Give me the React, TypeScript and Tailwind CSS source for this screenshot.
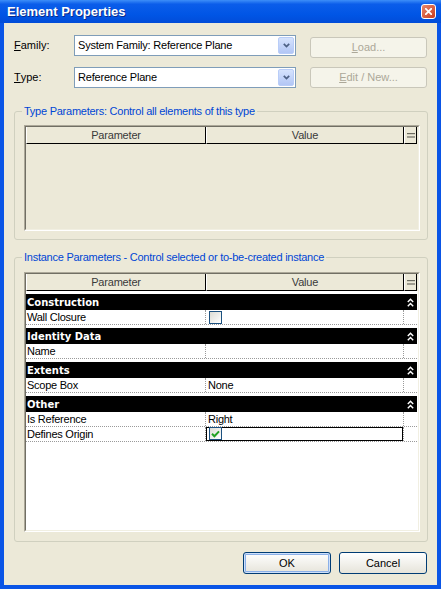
import React from 'react';

type Row = { label: string; value?: string; check?: 'off' | 'on' };
type Section = { name: string; rows: Row[] };

const sections: Section[] = [
  { name: 'Construction', rows: [{ label: 'Wall Closure', check: 'off' }] },
  { name: 'Identity Data', rows: [{ label: 'Name', value: '' }] },
  { name: 'Extents', rows: [{ label: 'Scope Box', value: 'None' }] },
  {
    name: 'Other',
    rows: [
      { label: 'Is Reference', value: 'Right' },
      { label: 'Defines Origin', check: 'on' },
    ],
  },
];

const CloseIcon = () => (
  <svg width="7" height="7" viewBox="0 0 7 7">
    <path d="M0.8 0.8 L6.2 6.2 M6.2 0.8 L0.8 6.2" stroke="white" strokeWidth="1.8" strokeLinecap="square" />
  </svg>
);

const ChevronDown = () => (
  <svg width="7" height="5" viewBox="0 0 7 5">
    <path d="M0.8 0.8 L3.5 3.6 L6.2 0.8" fill="none" stroke="#4D6185" strokeWidth="1.7" />
  </svg>
);

const Collapse = () => (
  <svg width="7" height="9" viewBox="0 0 7 9">
    <path d="M0.8 4 L3.5 1.2 L6.2 4 M0.8 8.2 L3.5 5.4 L6.2 8.2" fill="none" stroke="white" strokeWidth="1.4" />
  </svg>
);

const EqualIcon = () => (
  <svg width="8" height="5" viewBox="0 0 8 5">
    <rect x="0" y="0" width="8" height="1.2" fill="#6b6a60" />
    <rect x="0" y="3.4" width="8" height="1.2" fill="#6b6a60" />
  </svg>
);

const CheckBox = ({ checked }: { checked?: boolean }) => (
  <div className="w-[13px] h-[13px] border border-[#1C5180] bg-linear-to-br from-[#DCDCD5] to-white flex items-center justify-center">
    {checked && (
      <svg width="9" height="8" viewBox="0 0 9 8">
        <path d="M1 3.8 L3.4 6.2 L8 1.4" fill="none" stroke="#21A121" strokeWidth="2" />
      </svg>
    )}
  </div>
);

const Combo = ({ text }: { text: string }) => (
  <div className="w-[222px] h-[21px] border border-[#7F9DB9] bg-white flex items-center justify-between">
    <span className="pl-[3px] text-[11px] tracking-[-0.2px] text-black">{text}</span>
    <div className="w-[16px] h-[17px] mr-[1px] rounded-[2px] border border-[#B9CDF8] bg-linear-to-b from-[#D6E3FD] to-[#B2C6F5] flex items-center justify-center">
      <ChevronDown />
    </div>
  </div>
);

const GridHeader = () => (
  <div className="flex h-[17px] bg-[#ECE9D8] text-[11px] text-[#3a3a3a] tracking-[-0.2px]">
    <div className="w-[180px] border-l border-l-white border-r border-r-black border-b border-b-black flex items-center justify-center">
      Parameter
    </div>
    <div className="w-[198px] border-l border-l-white border-r border-r-black border-b border-b-black flex items-center justify-center">
      Value
    </div>
    <div className="w-[13px] border-l border-l-white border-r border-r-black border-b border-b-black flex items-center justify-center">
      <EqualIcon />
    </div>
  </div>
);

const Grid = ({ className, children }: { className: string; children?: React.ReactNode }) => (
  <div className={`w-[396px] border border-t-[#ACA899] border-l-[#ACA899] border-r-white border-b-white ${className}`}>
    <div className="h-full border border-t-[#716F64] border-l-[#716F64] border-r-[#F1EFE2] border-b-[#F1EFE2] flex flex-col">
      {children}
    </div>
  </div>
);

const Legend = ({ children }: { children: React.ReactNode }) => (
  <legend className="-ml-[2px] px-[2px] text-[11px] leading-[14px] tracking-[-0.25px] text-[#0046D5]">{children}</legend>
);

export default function App() {
  return (
    <div className="w-[441px] h-[589px] bg-[#0A55E6] flex flex-col font-['Liberation_Sans',Arial,sans-serif]">
      <div className="h-[23px] flex items-center justify-between bg-[linear-gradient(180deg,#3D8EF8_0%,#0B5DEA_18%,#0055E5_65%,#024CD8_100%)]">
        <span className="pl-[7px] text-[13px] font-bold text-white [text-shadow:1px_1px_0_#0A2C8C]">Element Properties</span>
        <div className="mr-[5px] w-[15px] h-[15px] rounded-[3px] border border-white bg-linear-to-br from-[#E8876A] to-[#C8391A] flex items-center justify-center">
          <CloseIcon />
        </div>
      </div>

      <div className="mx-[4px] mb-[4px] flex-1 bg-[#ECE9D8] pl-[10px] pt-[12px] flex flex-col">
        <div className="flex items-start h-[21px]">
          <span className="w-[60px] h-[21px] flex items-center text-[11px] text-black">
            <span className="underline">F</span>amily:
          </span>
          <Combo text="System Family: Reference Plane" />
          <button className="ml-[14px] mt-[2px] w-[117px] h-[21px] rounded-[3px] border border-[#C9C7BA] bg-[#F5F4EA] text-[11px] text-[#ACA899]">
            <span className="underline">L</span>oad...
          </button>
        </div>

        <div className="flex items-start h-[21px] mt-[11px]">
          <span className="w-[60px] h-[21px] flex items-center text-[11px] text-black">
            <span className="underline">T</span>ype:
          </span>
          <Combo text="Reference Plane" />
          <button className="ml-[14px] w-[117px] h-[21px] rounded-[3px] border border-[#C9C7BA] bg-[#F5F4EA] text-[11px] text-[#ACA899]">
            <span className="underline">E</span>dit / New...
          </button>
        </div>

        <fieldset className="mt-[16px] w-[414px] rounded-[3px] border border-[#D0D0BF] pl-[9px] pr-[7px] pt-[7px] pb-[8px]">
          <Legend>Type Parameters: Control all elements of this type</Legend>
          <Grid className="h-[106px] bg-[#ECE9D8]">
            <GridHeader />
          </Grid>
        </fieldset>

        <fieldset className="mt-[10px] w-[414px] rounded-[3px] border border-[#D0D0BF] pl-[9px] pr-[7px] pt-[8px] pb-[9px]">
          <Legend>Instance Parameters - Control selected or to-be-created instance</Legend>
          <Grid className="h-[260px] bg-white">
            <GridHeader />
            {sections.map((s) => (
              <div key={s.name} className="pt-[3px] w-[391px]">
                <div className="h-[16px] bg-black text-white flex items-center">
                  <span className="w-[378px] pl-[1px] text-[10px] font-bold font-['DejaVu_Sans',sans-serif]">{s.name}</span>
                  <span className="w-[13px] flex justify-center">
                    <Collapse />
                  </span>
                </div>
                {s.rows.map((r) => (
                  <div key={r.label} className="h-[15px] flex border-b border-dotted border-b-[#9a9a9a] text-[11px] leading-[14px] tracking-[-0.25px] text-black">
                    <div className="w-[180px] pl-[1px] border-r border-dotted border-r-[#9a9a9a]">{r.label}</div>
                    <div className="w-[198px] border-r border-dotted border-r-[#9a9a9a]">
                      {r.check === 'off' && (
                        <div className="pl-[3px] pt-[1px]">
                          <CheckBox />
                        </div>
                      )}
                      {r.check === 'on' && (
                        <div className="w-[197px] h-[14px] border border-black pl-[2px]">
                          <div className="w-[13px] h-[12px] border-b-[2px] border-b-[#F5A755] -mt-[1px]">
                            <CheckBox checked />
                          </div>
                        </div>
                      )}
                      {r.value !== undefined && <span className="pl-[2px]">{r.value}</span>}
                    </div>
                    <div className="w-[13px]" />
                  </div>
                ))}
              </div>
            ))}
          </Grid>
        </fieldset>

        <div className="mt-[10px] w-[413px] flex justify-end gap-[8px]">
          <button className="w-[88px] h-[22px] rounded-[3px] border border-[#003C74] bg-linear-to-b from-white to-[#E6E4DA] shadow-[inset_0_0_0_1px_#CEE0FA,inset_0_0_0_2px_#8BB0E8] text-[11px] text-black">
            OK
          </button>
          <button className="w-[88px] h-[22px] rounded-[3px] border border-[#003C74] bg-linear-to-b from-white to-[#E6E4DA] text-[11px] text-black">
            Cancel
          </button>
        </div>
      </div>
    </div>
  );
}
